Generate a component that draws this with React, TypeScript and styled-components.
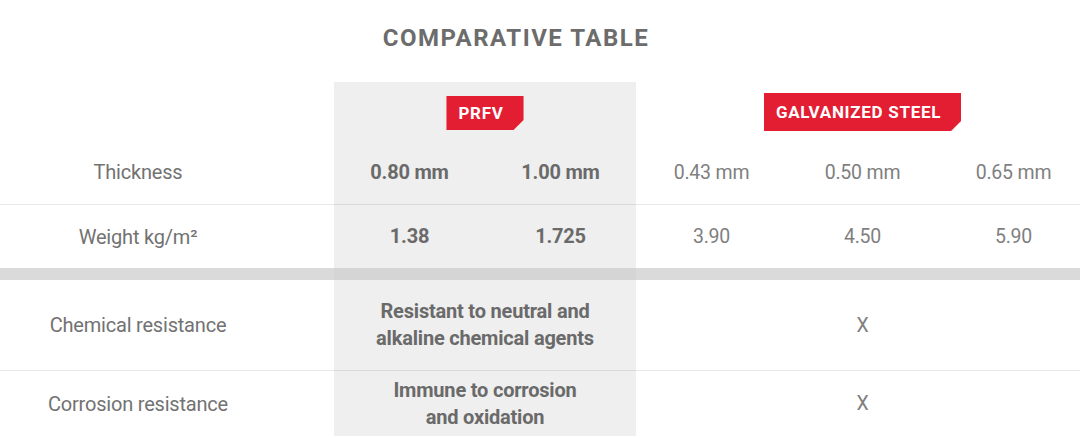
import React from "react";
import styled, { createGlobalStyle } from "styled-components";

const Global = createGlobalStyle`
  html, body { margin: 0; padding: 0; background: #fff; }
  body { overflow: hidden; width: 1080px; height: 438px; font-family: Roboto, "Liberation Sans", sans-serif; }
`;

const COLS = "334px 151px 151px 151px 151px 151px";

const Page = styled.div`
  width: 1089px;
  display: flex;
  flex-direction: column;
`;

const Title = styled.h1`
  margin: 0;
  height: 82px;
  box-sizing: border-box;
  padding: 24px 57px 0 0;
  text-align: center;
  font-family: Roboto, "Liberation Sans", sans-serif;
  font-weight: 700;
  font-size: 24px;
  letter-spacing: 1.5px;
  line-height: 28px;
  color: #6c6c6c;
`;

const Row = styled.div<{ $h: number }>`
  display: grid;
  grid-template-columns: ${COLS};
  height: ${(p) => p.$h}px;
`;

const Cell = styled.div<{ $shade?: boolean; $span?: number; $line?: boolean }>`
  grid-column: span ${(p) => p.$span ?? 1};
  background: ${(p) => (p.$shade ? "#efefef" : "#ffffff")};
  border-bottom: ${(p) => (p.$line ? "1px solid rgba(0,0,0,0.09)" : "none")};
  display: flex;
  align-items: center;
  justify-content: center;
  text-align: center;
  min-width: 0;
`;

const BadgeCell = styled(Cell)`
  align-items: flex-start;
`;

const LabelCell = styled(Cell)`
  padding-right: 58px;
`;

const Badge = styled.div<{ $h: number; $top: number }>`
  margin-top: ${(p) => p.$top}px;
  height: ${(p) => p.$h}px;
  box-sizing: border-box;
  padding: 0 20px 1px 12px;
  display: flex;
  align-items: center;
  background: #e41e32;
  color: #fff;
  font-family: Roboto, "Liberation Sans", sans-serif;
  font-weight: 700;
  font-size: 17px;
  letter-spacing: 0.7px;
  clip-path: polygon(0 0, 100% 0, 100% calc(100% - 10px), calc(100% - 10px) 100%, 0 100%);
`;

const Label = styled.span`
  font-size: 20px;
  color: #727272;
  letter-spacing: -0.2px;
`;

const Strong = styled.span`
  font-size: 20px;
  font-weight: 700;
  color: #6a6a6a;
  line-height: 27px;
  letter-spacing: -0.2px;
`;

const Plain = styled.span`
  font-size: 19.5px;
  color: #7f7f7f;
  letter-spacing: -0.2px;
`;

const Sep = styled.div`
  display: grid;
  grid-template-columns: 334px 302px 1fr;
  height: 12px;
`;

const SepPart = styled.div<{ $dark?: boolean }>`
  background: ${(p) => (p.$dark ? "#d5d5d5" : "#dadada")};
`;

export default function App() {
  return (
    <>
      <Global />
      <Page>
        <Title>COMPARATIVE TABLE</Title>
        <Row $h={58}>
          <Cell />
          <BadgeCell $shade $span={2}>
            <Badge $h={34} $top={14}>PRFV</Badge>
          </BadgeCell>
          <BadgeCell $span={3}>
            <Badge $h={38} $top={11}>GALVANIZED STEEL</Badge>
          </BadgeCell>
        </Row>
        <Row $h={65}>
          <LabelCell $line><Label>Thickness</Label></LabelCell>
          <Cell $shade $line><Strong>0.80 mm</Strong></Cell>
          <Cell $shade $line><Strong>1.00 mm</Strong></Cell>
          <Cell $line><Plain>0.43 mm</Plain></Cell>
          <Cell $line><Plain>0.50 mm</Plain></Cell>
          <Cell $line><Plain>0.65 mm</Plain></Cell>
        </Row>
        <Row $h={63}>
          <LabelCell><Label>Weight kg/m²</Label></LabelCell>
          <Cell $shade><Strong>1.38</Strong></Cell>
          <Cell $shade><Strong>1.725</Strong></Cell>
          <Cell><Plain>3.90</Plain></Cell>
          <Cell><Plain>4.50</Plain></Cell>
          <Cell><Plain>5.90</Plain></Cell>
        </Row>
        <Sep>
          <SepPart />
          <SepPart $dark />
          <SepPart />
        </Sep>
        <Row $h={91}>
          <LabelCell $line><Label>Chemical resistance</Label></LabelCell>
          <Cell $shade $line $span={2}>
            <Strong>Resistant to neutral and<br />alkaline chemical agents</Strong>
          </Cell>
          <Cell $line $span={3}><Plain>X</Plain></Cell>
        </Row>
        <Row $h={65}>
          <LabelCell><Label>Corrosion resistance</Label></LabelCell>
          <Cell $shade $span={2}>
            <Strong>Immune to corrosion<br />and oxidation</Strong>
          </Cell>
          <Cell $span={3}><Plain>X</Plain></Cell>
        </Row>
      </Page>
    </>
  );
}
